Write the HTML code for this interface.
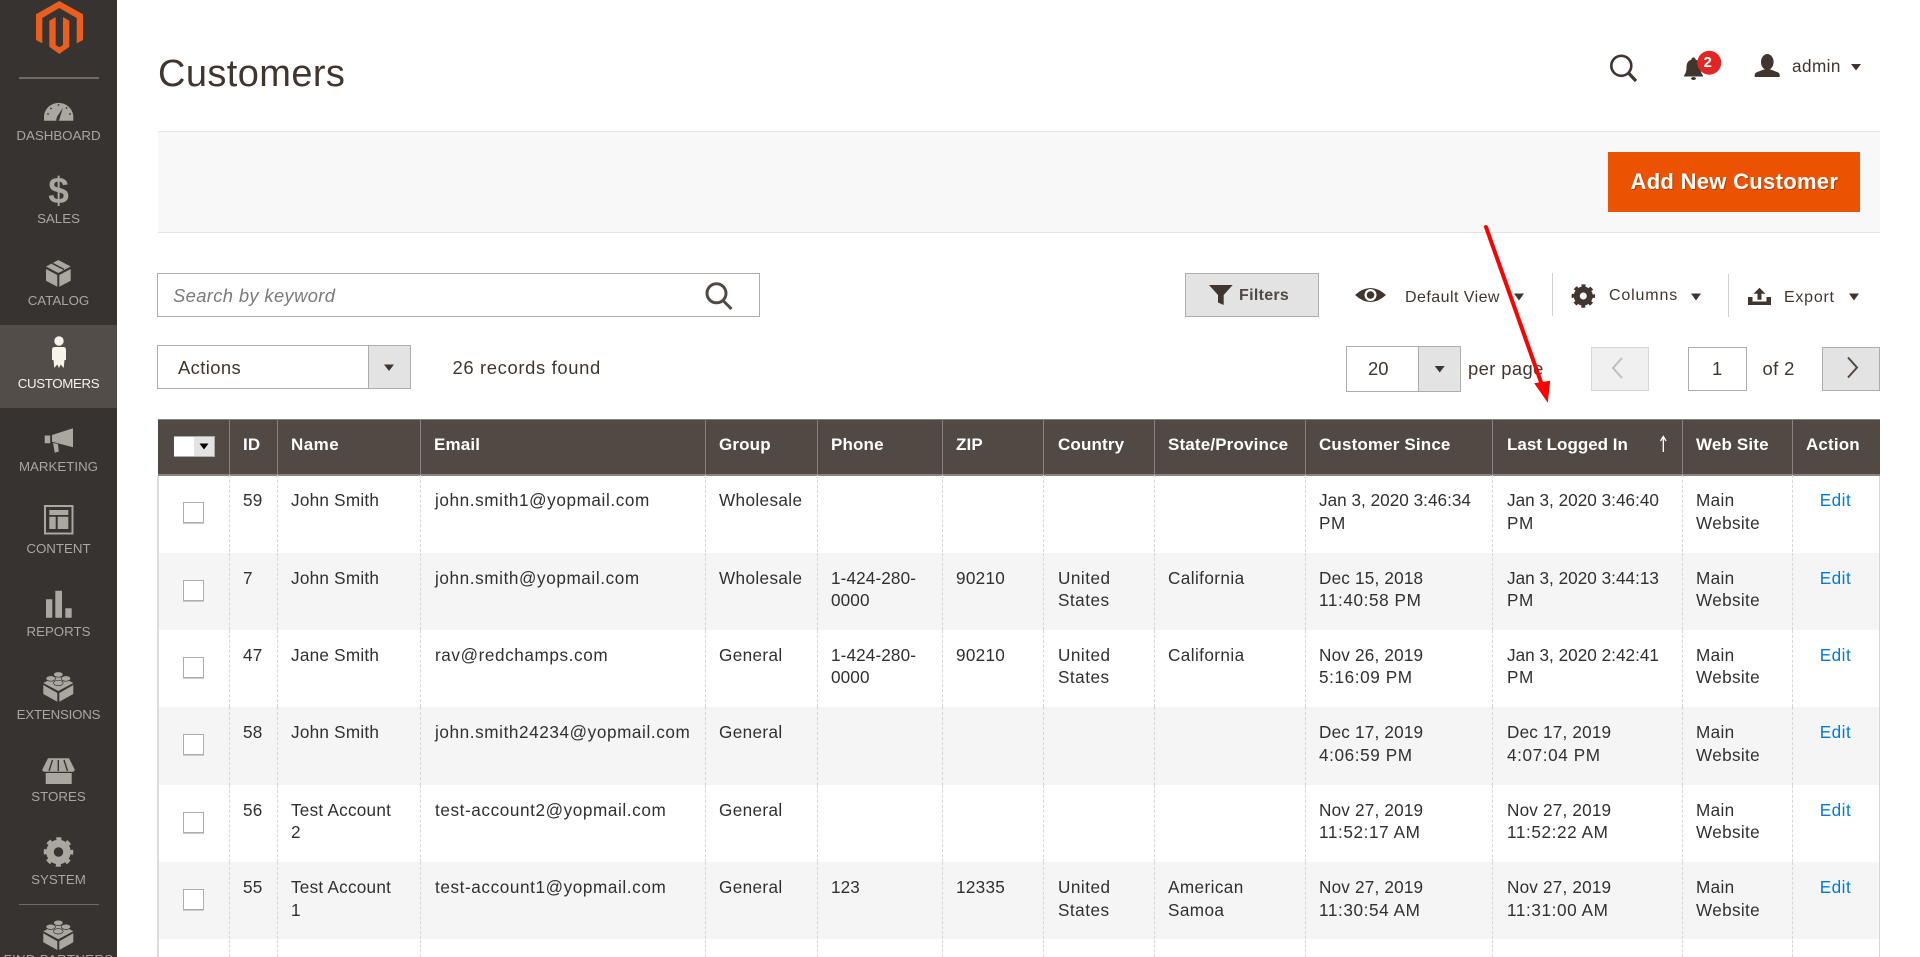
<!DOCTYPE html>
<html lang="en"><head><meta charset="utf-8"><title>Customers</title>
<style>
*{box-sizing:border-box}
html,body{margin:0;padding:0;width:1920px;height:957px;overflow:hidden;background:#fff}
body{position:relative;font-family:"Liberation Sans",Arial,sans-serif;color:#41362f}
.a{position:absolute}
.t{position:absolute;white-space:nowrap}
svg.o{position:absolute;left:0;top:0;width:1920px;height:957px;pointer-events:none}
#side{position:absolute;left:0;top:0;width:117px;height:957px;background:#373330;overflow:hidden}
#act{position:absolute;left:0;top:325px;width:117px;height:83px;background:#524d49}
.l{position:absolute;left:0;width:117px;text-align:center;font-size:13.3px;line-height:18px;color:#aaa6a0;white-space:nowrap}
.box{position:absolute;background:#fff;border:1px solid #adadad}
.f18{font-size:18.4px;line-height:24px}
.g{display:grid;grid-template-columns:71px 48px 143px 285px 112px 125px 101px 111px 151px 187px 190px 110px 88px;position:absolute;left:158px;width:1722px}
.h{top:419px;height:57px;background:#514943;border-top:1px solid #8a837f;border-bottom:2px solid #8a837f;color:#fff;font-weight:bold;font-size:17px;line-height:22px;letter-spacing:.15px}
.h div{border-left:1px solid #8a837f;padding:14px 0 0 13px;white-space:nowrap}
.h div:first-child{border-left:0}
.r{height:77.4px;font-size:17.14px;line-height:22.4px;color:#303030;letter-spacing:.5px;white-space:nowrap}
.r>div{border-left:1px dashed #d6d6d6;padding:14px 0 0 13px}
.r>div:first-child{border-left:0;padding:0;position:relative}
.r>div:last-child{padding:14px 2px 0 0;text-align:center;color:#007bdb}
.r>div:nth-child(2){letter-spacing:.2px}
.r>div:nth-child(3){letter-spacing:.25px}
.r>div:nth-child(4){letter-spacing:.6px;padding-left:14px}
.r>div:nth-child(5){letter-spacing:.38px}
.r>div:nth-child(6){letter-spacing:.13px}
.r>div:nth-child(7){letter-spacing:.3px}
.r>div:nth-child(8){padding-left:14px}
.r>div:nth-child(9){letter-spacing:.42px}
.r>div:nth-child(10),.r>div:nth-child(11){letter-spacing:.6px}
.r>div:nth-child(11){padding-left:14px}
.r>div:nth-child(12){letter-spacing:.35px}
.d{letter-spacing:.2px}
.j{letter-spacing:.03px}
.r.e{background:#f5f5f5}
.cb{position:absolute;left:25px;top:27px;width:21px;height:21px;background:#fff;border:1px solid #adadad;box-shadow:0 1px 0 #ccc}
</style></head>
<body>
<div id="side"><div id="act"></div>
<div class="a" style="left:19px;top:77px;width:80px;height:2px;background:#736963"></div>
<div class="a" style="left:19px;top:904px;width:80px;height:1px;background:#736963"></div>
<div class="l" style="top:127px">DASHBOARD</div>
<div class="l" style="top:210px">SALES</div>
<div class="l" style="top:292px">CATALOG</div>
<div class="l" style="top:375px;color:#f7f3eb;letter-spacing:-.35px">CUSTOMERS</div>
<div class="l" style="top:458px">MARKETING</div>
<div class="l" style="top:540px">CONTENT</div>
<div class="l" style="top:623px">REPORTS</div>
<div class="l" style="top:706px;letter-spacing:-.2px">EXTENSIONS</div>
<div class="l" style="top:788px">STORES</div>
<div class="l" style="top:871px">SYSTEM</div>
<div class="l" style="top:951px;letter-spacing:.3px">FIND PARTNERS</div>
<div class="t" style="left:0;width:117px;text-align:center;top:171px;font-size:37px;line-height:40px;font-weight:bold;color:#aaa6a0">$</div>
</div>

<svg class="o" viewBox="0 0 1920 957" style="z-index:2">
<!-- logo -->
<path fill="#eb5e1e" d="M59.300 1 83 14.300V40l-6.300 3.400V18L59.300 8 42.300 18v25.400L36 40V14.300z"/>
<path fill="#eb5e1e" d="M49.300 20.700 55.700 17v28l3.600 2.300L63 45V17l6.300 3.700v26L59.300 54l-10-7.300z"/>
<!-- dashboard -->
<path fill="#aaa6a0" d="M44 120.700V116a14.700 14.300 0 0 1 29.300 0v4.700z"/>
<path fill="#373330" d="M56 120.700l1-4 6-9-3.200 10-.8 3z"/>
<g fill="#373330"><circle cx="48" cy="114" r=".9"/><circle cx="51" cy="108.500" r=".9"/><circle cx="58.500" cy="105" r=".9"/><circle cx="66.500" cy="108" r=".9"/><circle cx="70" cy="114" r=".9"/></g>
<!-- catalog -->
<path fill="#aaa6a0" d="M58.300 260 70.700 266.500 58.300 273 46 266.500zM46 269l11.300 6v11.700L46 280.700zM70.700 269l-11.400 6v11.700l11.400-6z"/>
<path stroke="#373330" stroke-width="1.500" fill="none" d="M52 263.200l12 6.300"/>
<!-- customers -->
<circle cx="59" cy="341" r="4.700" fill="#f7f3eb"/>
<path fill="#f7f3eb" d="M54.500 347h9q2.500 0 2.500 3v10h-1.500l-.8 8-3-3.500-1.700 3.500-1.700-3.500-3 3.500-.8-8H52v-10q0-3 2.500-3z"/>
<!-- marketing -->
<path fill="#aaa6a0" d="M52 435 73 428.300v19L52 441.700zM44.700 435.500h5.500v7.800h-5.500zM53 443l5 1 .8 7.500-4 1.200z"/>
<!-- content -->
<rect x="45" y="506" width="27.500" height="27.500" fill="none" stroke="#aaa6a0" stroke-width="2"/>
<path fill="#aaa6a0" d="M49.300 510h19v5h-19zM49.300 516.700h6.400V529h-6.400zM57.700 516.700h10.600V529H57.700z"/>
<!-- reports -->
<path fill="#aaa6a0" d="M46 599.300h6.300v18.400H46zM55.300 590.700H62v27h-6.700zM65.300 608.300h6.400v9.400h-6.400z"/>
<!-- extensions -->
<path fill="#aaa6a0" d="M58.300 675 73.300 683 58.300 691 43.300 683zM43.300 685l14 8v8.700l-14-7.700zM73.300 685l-14 8v8.700l14-7.700z"/>
<g fill="#aaa6a0" stroke="#373330" stroke-width=".7"><ellipse cx="58.300" cy="674.500" rx="4.800" ry="2.700"/><ellipse cx="50.700" cy="678.500" rx="4.800" ry="2.700"/><ellipse cx="65.900" cy="678.500" rx="4.800" ry="2.700"/><ellipse cx="58.300" cy="683" rx="4.800" ry="2.700"/></g>
<g transform="translate(0 248.300)">
<path fill="#aaa6a0" d="M58.300 675 73.300 683 58.300 691 43.300 683zM43.300 685l14 8v8.700l-14-7.700zM73.300 685l-14 8v8.700l14-7.700z"/>
<g fill="#aaa6a0" stroke="#373330" stroke-width=".7"><ellipse cx="58.300" cy="674.500" rx="4.800" ry="2.700"/><ellipse cx="50.700" cy="678.500" rx="4.800" ry="2.700"/><ellipse cx="65.900" cy="678.500" rx="4.800" ry="2.700"/><ellipse cx="58.300" cy="683" rx="4.800" ry="2.700"/></g>
</g>
<!-- stores -->
<path fill="#aaa6a0" d="M48 758.300h21l5.700 11.200q0 2.200-2 2.200H44.300q-2 0-2-2.200z"/>
<path fill="#aaa6a0" d="M45.700 773h26v11h-26z"/>
<path stroke="#373330" stroke-width="1.400" fill="none" d="M52.500 760 49 771M58.300 760v11M64 760l3.500 11"/>
<!-- system gear -->
<g fill="none" stroke="#aaa6a0"><circle cx="58.500" cy="852" r="8.500" stroke-width="7.500"/><circle cx="58.500" cy="852" r="12.800" stroke-width="4" stroke-dasharray="5 5.050" stroke-dashoffset="2.500"/></g>

<!-- header icons -->
<g fill="none" stroke="#41362f" stroke-width="2.600"><circle cx="1621.300" cy="65.800" r="10"/><path d="M1628.500 73l7.500 8" stroke-width="3.200"/></g>
<path fill="#41362f" d="M1693.500 57.500c1.500 0 2 1 2 2 4 1.500 5 4 5 8 0 4 1 6 2.500 8v1h-19v-1c1.500-2 2.500-4 2.500-8 0-4 1-6.500 5-8 0-1 .5-2 2-2z"/>
<ellipse cx="1693.500" cy="78.500" rx="2.500" ry="1.500" fill="#41362f"/>
<circle cx="1709.300" cy="62.700" r="12" fill="#e22626"/>
<ellipse cx="1767.300" cy="62" rx="6.300" ry="8" fill="#41362f"/>
<path fill="#41362f" d="M1754.700 77v-2q0-2.500 4-3.500l5-2h7l5 2q4 1 4 3.500v2z"/>
<path fill="#41362f" d="M1851 64h10l-5 6.500z"/>
<!-- toolbar icons -->
<path fill="#41362f" d="M1209 285h23.700l-9 10v10l-5.700-2.500v-7.500z"/>
<path fill="#41362f" d="M1355 295q15.500-14 31 0q-15.500 14-31 0z"/>
<circle cx="1370.500" cy="295" r="6" fill="#fff"/><circle cx="1370.500" cy="295" r="3.800" fill="#41362f"/>
<path fill="#41362f" d="M1514 293.500h10l-5 7zM1691 293.500h10l-5 7zM1849 293.500h10l-5 7z"/>
<g fill="none" stroke="#41362f"><circle cx="1583.300" cy="296" r="6.500" stroke-width="6"/><circle cx="1583.300" cy="296" r="10" stroke-width="3.400" stroke-dasharray="3.900 3.950" stroke-dashoffset="2"/></g>
<path fill="#41362f" d="M1748 297h4.500v4.500h14V297h4.500v8h-23zM1759.500 287.700l6 6h-4v6h-4v-6h-4z"/>
<g fill="none" stroke="#514943" stroke-width="3"><circle cx="716.500" cy="293.300" r="9.500"/><path d="M723 300.500l8.500 8.500"/></g>
</svg>

<div class="t" style="left:158px;top:51px;font-size:38px;line-height:46px;letter-spacing:.4px">Customers</div>
<div class="t" style="left:1792px;top:54px;font-size:17.140px;line-height:24px;letter-spacing:.45px">admin</div>
<div class="t" style="left:1703.500px;top:53px;font-size:15px;line-height:20px;font-weight:bold;color:#fff;z-index:3">2</div>

<div class="a" style="left:157.500px;top:131px;width:1722.500px;height:102px;background:#f8f8f8;border-top:1px solid #e3e3e3;border-bottom:1px solid #e3e3e3"></div>
<div class="a" style="left:1608px;top:152px;width:252px;height:60px;background:#eb5202"></div>
<div class="t" style="left:1630.500px;top:169px;font-size:22px;line-height:26px;font-weight:bold;color:#fff;letter-spacing:.3px;text-shadow:1px 1px 0 rgba(0,0,0,.25)">Add New Customer</div>

<div class="box" style="left:157px;top:273px;width:603px;height:44px"></div>
<div class="t f18" style="left:173px;top:284px;font-style:italic;color:#7a7a7a;letter-spacing:.35px;z-index:1">Search by keyword</div>

<div class="a" style="left:1185px;top:273px;width:133.500px;height:44px;background:#e3e3e3;border:1px solid #adadad"></div>
<div class="t" style="left:1239px;top:286px;font-size:16px;line-height:20px;font-weight:bold;color:#514943;letter-spacing:.3px">Filters</div>
<div class="t" style="left:1405px;top:288px;font-size:16px;line-height:20px;letter-spacing:.45px">Default View</div>
<div class="a" style="left:1551.500px;top:273px;width:1px;height:43px;background:#d1d1d1"></div>
<div class="t" style="left:1609px;top:286px;font-size:16px;line-height:20px;letter-spacing:.85px">Columns</div>
<div class="a" style="left:1727.500px;top:274px;width:1px;height:43px;background:#d1d1d1"></div>
<div class="t" style="left:1784px;top:288px;font-size:16px;line-height:20px;letter-spacing:.75px">Export</div>

<div class="box" style="left:157px;top:345px;width:254px;height:44px"></div>
<div class="a" style="left:368px;top:346px;width:42px;height:42px;background:#e3e3e3;border-left:1px solid #adadad"></div>
<div class="t f18" style="left:178px;top:356px;letter-spacing:.4px">Actions</div>
<div class="t f18" style="left:452.500px;top:356px;letter-spacing:.65px">26 records found</div>

<div class="box" style="left:1345.500px;top:346px;width:115px;height:45.500px"></div>
<div class="a" style="left:1418px;top:347px;width:42px;height:43.500px;background:#e3e3e3;border-left:1px solid #adadad"></div>
<div class="t f18" style="left:1368px;top:357px">20</div>
<div class="t f18" style="left:1468px;top:357px;letter-spacing:.4px">per page</div>
<div class="a" style="left:1591px;top:347px;width:57.500px;height:43.500px;background:#f0f0f0;border:1px solid #d6d6d6"></div>
<div class="box" style="left:1688px;top:347px;width:58.500px;height:43.500px"></div>
<div class="t f18" style="left:1712px;top:357px">1</div>
<div class="t f18" style="left:1762.500px;top:357px;letter-spacing:.4px">of 2</div>
<div class="a" style="left:1821.500px;top:347px;width:58.500px;height:43.500px;background:#e3e3e3;border:1px solid #adadad"></div>

<div class="g h">
<div></div><div>ID</div><div style="letter-spacing:.45px">Name</div><div>Email</div><div>Group</div><div>Phone</div><div>ZIP</div><div style="padding-left:14px">Country</div><div>State/Province</div><div>Customer Since</div><div style="padding-left:14px;letter-spacing:0">Last Logged In</div><div>Web Site</div><div>Action</div>
</div>
<div class="a" style="left:173.500px;top:436px;width:41px;height:21px;background:#e3e3e3;border:1px solid #adadad"></div>
<div class="a" style="left:174px;top:437px;width:20px;height:19px;background:#fff"></div>

<div class="g r" style="top:475.100px"><div><span class="cb"></span></div><div>59</div><div>John Smith</div><div>john.smith1@yopmail.com</div><div>Wholesale</div><div></div><div></div><div></div><div></div><div><span class="j">Jan 3, 2020 3:46:34</span><br>PM</div><div><span class="j">Jan 3, 2020 3:46:40</span><br>PM</div><div>Main<br>Website</div><div>Edit</div></div>
<div class="g r e" style="top:552.500px"><div><span class="cb"></span></div><div>7</div><div>John Smith</div><div>john.smith@yopmail.com</div><div>Wholesale</div><div>1-424-280-<br>0000</div><div>90210</div><div>United<br>States</div><div>California</div><div><span class="d">Dec 15, 2018</span><br>11:40:58 PM</div><div><span class="j">Jan 3, 2020 3:44:13</span><br>PM</div><div>Main<br>Website</div><div>Edit</div></div>
<div class="g r" style="top:629.900px"><div><span class="cb"></span></div><div>47</div><div>Jane Smith</div><div>rav@redchamps.com</div><div>General</div><div>1-424-280-<br>0000</div><div>90210</div><div>United<br>States</div><div>California</div><div><span class="d">Nov 26, 2019</span><br>5:16:09 PM</div><div><span class="j">Jan 3, 2020 2:42:41</span><br>PM</div><div>Main<br>Website</div><div>Edit</div></div>
<div class="g r e" style="top:707.300px"><div><span class="cb"></span></div><div>58</div><div>John Smith</div><div>john.smith24234@yopmail.com</div><div>General</div><div></div><div></div><div></div><div></div><div><span class="d">Dec 17, 2019</span><br>4:06:59 PM</div><div><span class="d">Dec 17, 2019</span><br>4:07:04 PM</div><div>Main<br>Website</div><div>Edit</div></div>
<div class="g r" style="top:784.700px"><div><span class="cb"></span></div><div>56</div><div>Test Account<br>2</div><div>test-account2@yopmail.com</div><div>General</div><div></div><div></div><div></div><div></div><div><span class="d">Nov 27, 2019</span><br>11:52:17 AM</div><div><span class="d">Nov 27, 2019</span><br>11:52:22 AM</div><div>Main<br>Website</div><div>Edit</div></div>
<div class="g r e" style="top:862.100px"><div><span class="cb"></span></div><div>55</div><div>Test Account<br>1</div><div>test-account1@yopmail.com</div><div>General</div><div>123</div><div>12335</div><div>United<br>States</div><div>American<br>Samoa</div><div><span class="d">Nov 27, 2019</span><br>11:30:54 AM</div><div><span class="d">Nov 27, 2019</span><br>11:31:00 AM</div><div>Main<br>Website</div><div>Edit</div></div>
<div class="g r" style="top:939.500px;height:17.500px"><div></div><div></div><div></div><div></div><div></div><div></div><div></div><div></div><div></div><div></div><div></div><div></div><div></div></div>

<!-- table borders -->
<div class="a" style="left:157px;top:476px;width:2px;height:481px;background:#dcdcdc"></div>
<div class="a" style="left:1879px;top:476px;width:1px;height:481px;background:#d6d6d6"></div>

<svg class="o" viewBox="0 0 1920 957" style="z-index:5">
<path fill="#41362f" d="M384 364.500h10l-5 6.500zM1434.700 366h10l-5 6.500z"/>
<path fill="#000" d="M199.500 443.500h9l-4.500 6z"/>
<path fill="none" stroke="#c2bdb9" stroke-width="2" d="M1622 358l-9 10 9 10"/>
<path fill="none" stroke="#514943" stroke-width="2" d="M1848 357.500l9 10-9 10"/>
<path fill="none" stroke="#fff" stroke-width="1.300" d="M1663.300 452v-15M1660.500 441l2.800-4.500 2.800 4.500"/>
<path fill="none" stroke="#fe0000" stroke-width="4" stroke-linecap="round" d="M1486 227l56 158"/>
<path fill="#fe0000" d="M1534.200 383.300 1550.200 380.700 1547.800 402.700z"/>
</svg>
</body></html>
